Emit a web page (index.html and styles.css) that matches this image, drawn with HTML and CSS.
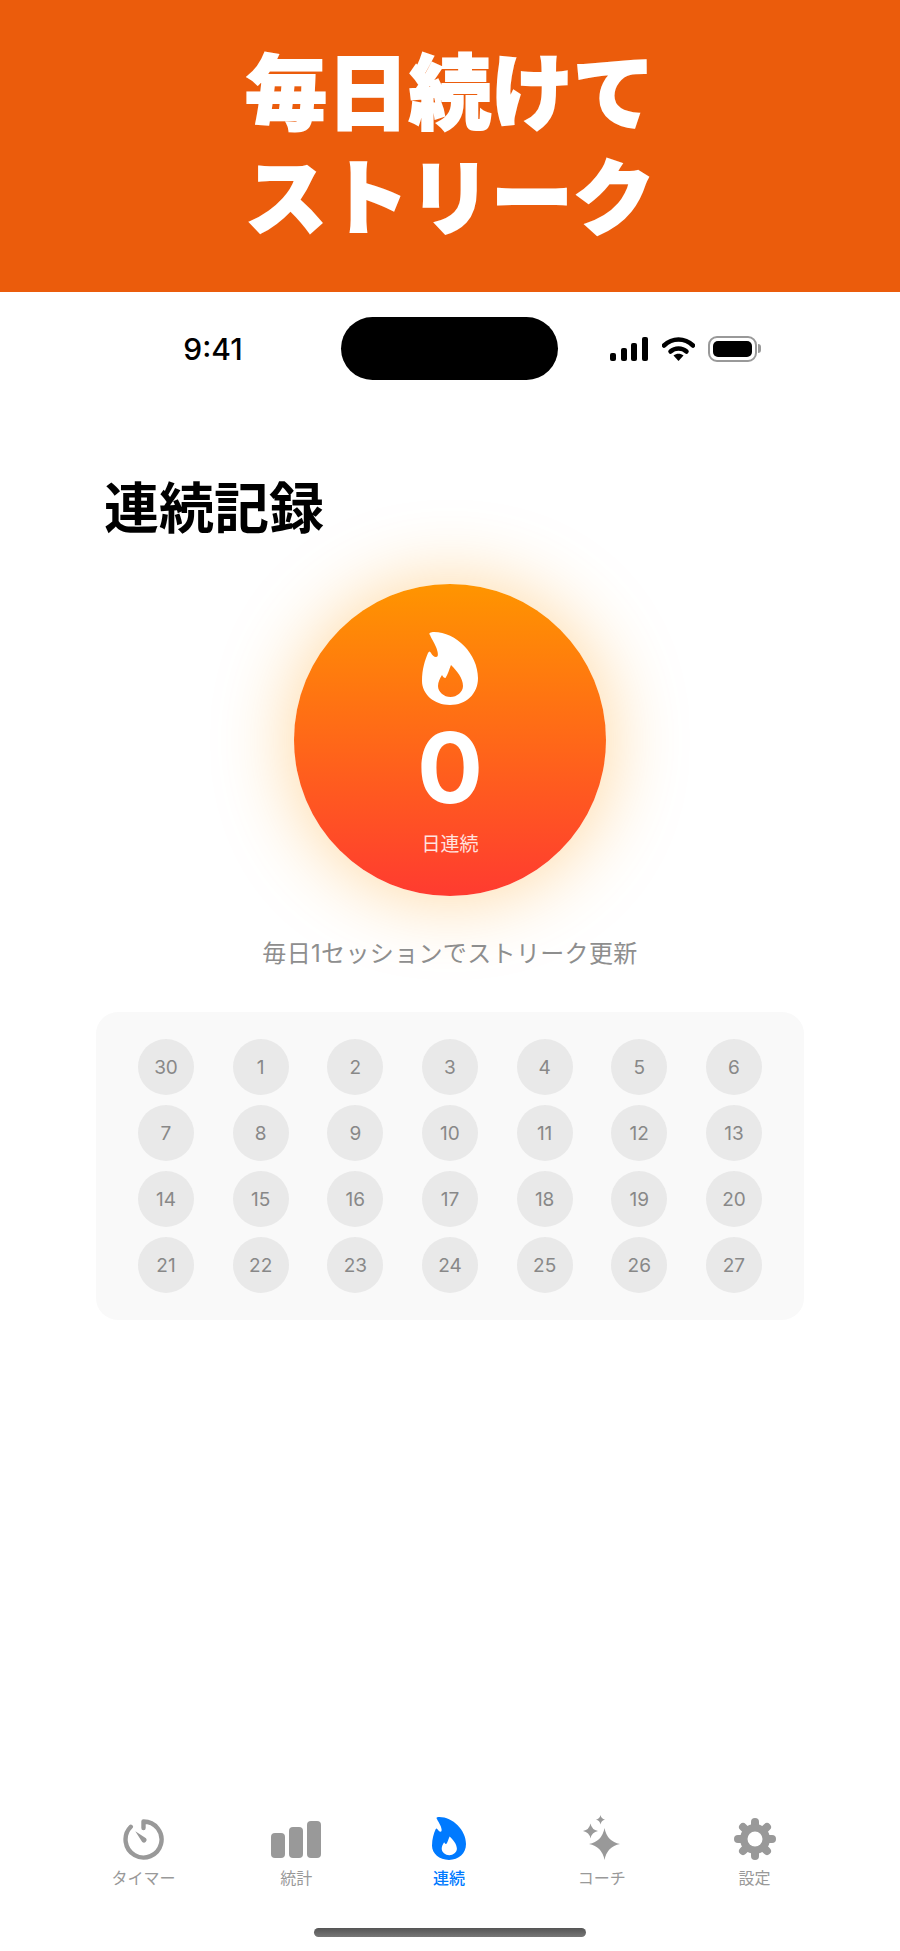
FILE: index.html
```html
<!doctype html>
<html lang="ja">
<head>
<meta charset="utf-8">
<title>連続記録</title>
<link rel="stylesheet" href="styles.css">
</head>
<body>
<header class="banner">
  <h1>毎日続けて<br>ストリーク</h1>
</header>

<div class="status">
  <span class="time">9:41</span>
  <div class="island"></div>
  <div class="signal"><i class="b1"></i><i class="b2"></i><i class="b3"></i><i class="b4"></i></div>
  <svg class="wifi" viewBox="0 0 33 24" width="33" height="24">
    <path d="M2 8.500 C10.500 0.500 22.500 0.500 31 8.500" fill="none" stroke="#000" stroke-width="4.500" stroke-linecap="round"/>
    <path d="M8.500 14.500 C13 10.500 20 10.500 24.500 14.500" fill="none" stroke="#000" stroke-width="4.500" stroke-linecap="round"/>
    <path d="M11.500 18.500 C14.500 16.300 18.500 16.300 21.500 18.500 L16.500 24 Z"/>
  </svg>
  <div class="battery"><div class="charge"></div></div>
  <div class="nub"></div>
</div>

<main class="content">
  <h2 class="title">連続記録</h2>

  <div class="streak">
    <svg class="flame" viewBox="0 0 56 73" width="56" height="73">
      <path fill="#fff" fill-rule="evenodd" d="M8 3 C6 1 9 0 12 0 C34 0 56 22 56 46 C56 62 44 73 28 73 C12 73 0 62 0 49 C0 37 3 28 6 21 C7 19 8 19 9 21 C10 23 12 25 14 25 C17 25 16 20 14 15 C12 10 9 6 8 3 Z M29 33 C35 39 41 46 41 54 C41 60 35 65 28.500 65 C22 65 16 60 16 54 C16 50 18 46 20 43 C21 45 22 46 23.500 46 C26 42 27 38 29 33 Z"/>
    </svg>
    <div class="count">0</div>
    <div class="unit">日連続</div>
  </div>

  <p class="hint">毎日1セッションでストリーク更新</p>

  <div class="calendar">
    <div class="day">30</div><div class="day">1</div><div class="day">2</div><div class="day">3</div><div class="day">4</div><div class="day">5</div><div class="day">6</div>
    <div class="day">7</div><div class="day">8</div><div class="day">9</div><div class="day">10</div><div class="day">11</div><div class="day">12</div><div class="day">13</div>
    <div class="day">14</div><div class="day">15</div><div class="day">16</div><div class="day">17</div><div class="day">18</div><div class="day">19</div><div class="day">20</div>
    <div class="day">21</div><div class="day">22</div><div class="day">23</div><div class="day">24</div><div class="day">25</div><div class="day">26</div><div class="day">27</div>
  </div>
</main>

<nav class="tabs">
  <div class="tab">
    <div class="tab-icon">
      <svg viewBox="0 0 41 41" width="41" height="41">
        <path d="M20.500 9 V2.500 A18 18 0 1 1 7.800 7.800" fill="none" stroke="#999" stroke-width="4.400" stroke-linecap="round" stroke-linejoin="round"/>
        <path d="M12.300 12.300 L23 19.200 A2.700 2.700 0 0 1 19.200 23 Z" fill="#999"/>
      </svg>
    </div>
    <span>タイマー</span>
  </div>
  <div class="tab">
    <div class="tab-icon">
      <div class="bars"><i class="bar1"></i><i class="bar2"></i><i class="bar3"></i></div>
    </div>
    <span>統計</span>
  </div>
  <div class="tab active">
    <div class="tab-icon">
      <svg viewBox="0 0 56 73" width="34" height="43" preserveAspectRatio="none">
        <path fill="#007aff" fill-rule="evenodd" d="M8 3 C6 1 9 0 12 0 C34 0 56 22 56 46 C56 62 44 73 28 73 C12 73 0 62 0 49 C0 37 3 28 6 21 C7 19 8 19 9 21 C10 23 12 25 14 25 C17 25 16 20 14 15 C12 10 9 6 8 3 Z M29 33 C35 39 41 46 41 54 C41 60 35 65 28.500 65 C22 65 16 60 16 54 C16 50 18 46 20 43 C21 45 22 46 23.500 46 C26 42 27 38 29 33 Z"/>
      </svg>
    </div>
    <span>連続</span>
  </div>
  <div class="tab">
    <div class="tab-icon">
      <svg viewBox="0 0 38 45" width="38" height="45" fill="#999">
        <path d="M21.500 13 Q24 26.500 37 29 Q24 31.500 21.500 45 Q19 31.500 6 29 Q19 26.500 21.500 13 Z"/>
        <path d="M7.500 8.500 Q8.700 14.800 15 16 Q8.700 17.200 7.500 23.500 Q6.300 17.200 0 16 Q6.300 14.800 7.500 8.500 Z"/>
        <path d="M17.500 0 Q18.200 3.900 22 4.700 Q18.200 5.500 17.500 9.500 Q16.800 5.500 13 4.700 Q16.800 3.900 17.500 0 Z"/>
      </svg>
    </div>
    <span>コーチ</span>
  </div>
  <div class="tab">
    <div class="tab-icon">
      <svg viewBox="0 0 42 42" width="42" height="42">
        <g stroke="#999" stroke-width="8" stroke-linecap="round">
          <line x1="21" y1="4" x2="21" y2="38"/>
          <line x1="4" y1="21" x2="38" y2="21"/>
          <line x1="9" y1="9" x2="33" y2="33"/>
          <line x1="33" y1="9" x2="9" y2="33"/>
        </g>
        <circle cx="21" cy="21" r="15" fill="#999"/>
        <circle cx="21" cy="21" r="7.500" fill="#fff"/>
      </svg>
    </div>
    <span>設定</span>
  </div>
</nav>
<div class="home-bar"></div>
</body>
</html>
```

FILE: styles.css
```css
* {
	box-sizing: border-box;
}
body {
	margin: 0;
	min-height: 100vh;
	display: flex;
	flex-direction: column;
	background: #fff;
	color: #000;
	font-family: Inter, "Noto Sans CJK JP", sans-serif;
}
.banner {
	height: 292px;
	padding-top: 35px;
	background: #eb5c0c;
	text-align: center;
}
.banner h1 {
	margin: 0;
	color: #fff;
	font-family: "Noto Sans CJK JP", sans-serif;
	font-size: 82px;
	font-weight: 900;
	line-height: 105px;
	-webkit-text-stroke: 2px #fff;
}

/* status bar */
.status {
	display: flex;
	align-items: center;
	padding: 25px 0 0 183px;
}
.time {
	width: 60px;
	font-size: 30px;
	font-weight: 500;
	text-align: center;
}
.island {
	width: 217px;
	height: 63px;
	margin: 0 52px 0 98px;
	border-radius: 32px;
	background: #000;
}
.signal {
	display: flex;
	align-items: flex-end;
	gap: 4.500px;
	height: 24px;
}
.signal i {
	width: 6px;
	border-radius: 2px;
	background: #000;
}
.b1 { height: 8px; }
.b2 { height: 13px; }
.b3 { height: 18px; }
.b4 { height: 24px; }
.wifi {
	margin-left: 14px;
}
.battery {
	width: 49px;
	height: 26px;
	margin-left: 13px;
	padding: 3px;
	border: 2px solid #999;
	border-radius: 9px;
}
.charge {
	height: 100%;
	border-radius: 5px;
	background: #000;
}
.nub {
	width: 3px;
	height: 9px;
	margin-left: 1px;
	border-radius: 0 3px 3px 0;
	background: #999;
}

/* main */
.content {
	display: flex;
	flex-direction: column;
	align-items: center;
	padding: 0 96px;
}
.title {
	align-self: flex-start;
	margin: 87px 0 0 8px;
	font-family: "Noto Sans CJK JP", sans-serif;
	font-size: 55px;
	font-weight: 700;
	line-height: 74px;
}
.streak {
	width: 312px;
	height: 312px;
	margin-top: 43px;
	padding-top: 48px;
	display: flex;
	flex-direction: column;
	align-items: center;
	border-radius: 50%;
	background: linear-gradient(#ff9500, #ff3b30);
	box-shadow: 0 0 80px rgba(255, 149, 0, 0.4);
	color: #fff;
}
.flame {
	display: block;
}
.count {
	margin-top: 23px;
	font-size: 98px;
	font-weight: 700;
	line-height: 80px;
}
.unit {
	margin-top: 22px;
	font-family: "Noto Sans CJK JP", sans-serif;
	font-size: 19px;
	line-height: 26px;
	opacity: 0.85;
}
.hint {
	margin: 41px 0 0;
	color: #8e8e8e;
	font-size: 24px;
	letter-spacing: 0.35px;
	line-height: 34px;
}
.calendar {
	width: 100%;
	margin-top: 41px;
	padding: 27px 42px 27px;
	display: grid;
	grid-template-columns: repeat(7, 56px);
	justify-content: space-between;
	row-gap: 10px;
	border-radius: 22px;
	background: #f9f9f9;
}
.day {
	height: 56px;
	display: flex;
	align-items: center;
	justify-content: center;
	border-radius: 50%;
	background: #e9e9e9;
	color: #888;
	font-size: 19px;
}

/* tab bar */
.tabs {
	display: flex;
	margin-top: auto;
	padding: 0 69px 0 67px;
}
.tab {
	flex: 1;
	display: flex;
	flex-direction: column;
	align-items: center;
	color: #999;
	font-family: "Noto Sans CJK JP", sans-serif;
	font-size: 16px;
	line-height: 20px;
}
.tab-icon {
	height: 45px;
	margin-bottom: 7px;
	display: flex;
	align-items: flex-end;
}
.tab-icon svg {
	display: block;
}
.active {
	color: #007aff;
	font-weight: 500;
}
.bars {
	display: flex;
	align-items: flex-end;
	gap: 4px;
	margin-bottom: 2px;
}
.bars i {
	width: 14px;
	border-radius: 4px;
	background: #999;
}
.bar1 { height: 25px; }
.bar2 { height: 31px; }
.bar3 { height: 37px; }
.home-bar {
	width: 272px;
	height: 9px;
	margin: 41px auto 14px;
	border-radius: 5px;
	background: linear-gradient(#555, #777);
}
```
